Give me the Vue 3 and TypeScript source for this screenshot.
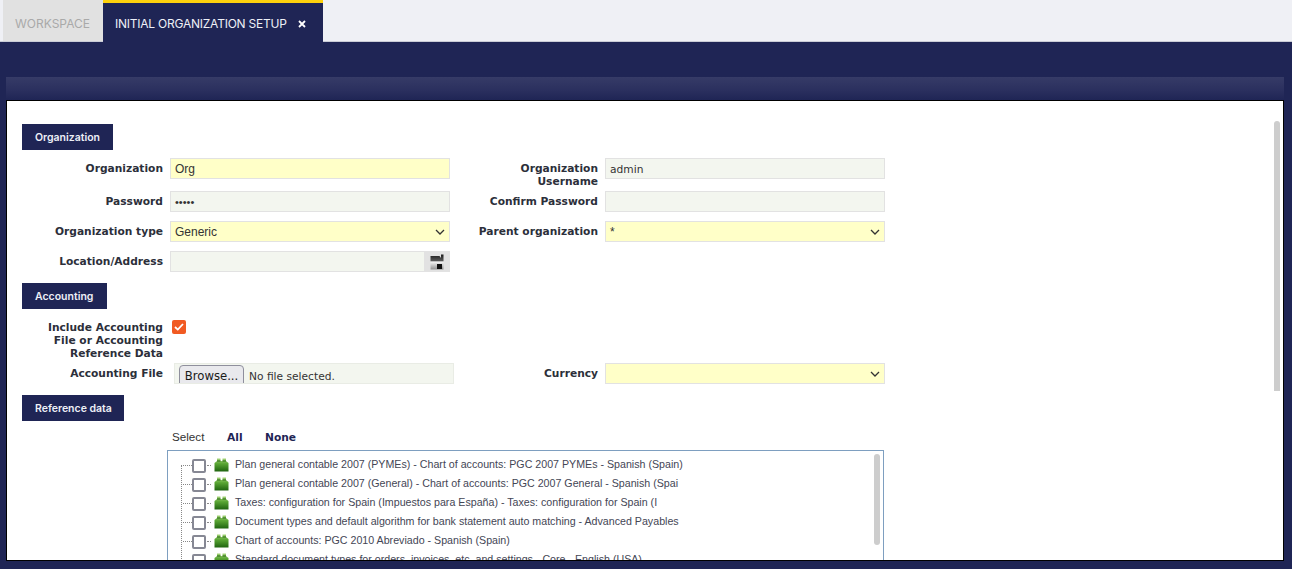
<script setup lang="ts">
const treeItems: string[] = [
  'Plan general contable 2007 (PYMEs) - Chart of accounts: PGC 2007 PYMEs - Spanish (Spain)',
  'Plan general contable 2007 (General) - Chart of accounts: PGC 2007 General - Spanish (Spai',
  'Taxes: configuration for Spain (Impuestos para España) - Taxes: configuration for Spain (I',
  'Document types and default algorithm for bank statement auto matching - Advanced Payables',
  'Chart of accounts: PGC 2010 Abreviado - Spanish (Spain)',
  'Standard document types for orders, invoices, etc. and settings - Core - English (USA)',
]
</script>

<template>
  <div class="app">
    <header class="tabbar">
      <div class="tab tab-idle">WORKSPACE</div>
      <div class="tab tab-active">
        <span>INITIAL ORGANIZATION SETUP</span>
        <svg class="close" width="8" height="8" viewBox="0 0 8 8"><path d="M1 1L7 7M7 1L1 7" stroke="#fff" stroke-width="1.8" /></svg>
      </div>
    </header>

    <div class="toolbar"></div>

    <main class="panel">
      <div class="section sec-org">Organization</div>

      <div class="row row-first">
        <label class="lbl">Organization</label>
        <div class="field req">Org</div>
        <label class="lbl lbl2">Organization Username</label>
        <div class="field dv">admin</div>
      </div>
      <div class="row row-pass">
        <label class="lbl">Password</label>
        <div class="field dots">•••••</div>
        <label class="lbl lbl2">Confirm Password</label>
        <div class="field"></div>
      </div>
      <div class="row row-sel">
        <label class="lbl">Organization type</label>
        <div class="field req sel">
          <span>Generic</span>
          <svg class="chev" width="10" height="6" viewBox="0 0 10 6"><path d="M1 1L5 5L9 1" fill="none" stroke="#333" stroke-width="1.3" /></svg>
        </div>
        <label class="lbl lbl2">Parent organization</label>
        <div class="field req sel">
          <span>*</span>
          <svg class="chev" width="10" height="6" viewBox="0 0 10 6"><path d="M1 1L5 5L9 1" fill="none" stroke="#333" stroke-width="1.3" /></svg>
        </div>
      </div>
      <div class="row row-loc">
        <label class="lbl">Location/Address</label>
        <div class="field loc">
          <span class="loc-btn">
            <svg width="14" height="16" viewBox="0 0 14 16">
              <defs>
                <linearGradient id="disk" x1="0" y1="0" x2="0" y2="1">
                  <stop offset="0" stop-color="#1c1c1c" />
                  <stop offset="0.4" stop-color="#555" />
                  <stop offset="0.5" stop-color="#f4f4f4" />
                  <stop offset="1" stop-color="#8f8f8f" />
                </linearGradient>
              </defs>
              <path d="M0.5 2H9.5L11 4V0.5H13.5V15.5H0.5Z" fill="url(#disk)" />
              <rect x="7" y="10" width="5" height="5" fill="#111" />
            </svg>
          </span>
        </div>
      </div>

      <div class="section sec-acc">Accounting</div>

      <div class="row row-check">
        <label class="lbl">Include Accounting File or Accounting Reference Data</label>
        <div class="check-wrap">
          <span class="check">
            <svg width="10" height="8" viewBox="0 0 10 8"><path d="M1 4L3.8 6.6L9 1" fill="none" stroke="#fff" stroke-width="1.8" /></svg>
          </span>
        </div>
      </div>
      <div class="row row-file">
        <label class="lbl">Accounting File</label>
        <div class="filebox">
          <span class="browse">Browse...</span>
          <span class="nofile">No file selected.</span>
        </div>
        <label class="lbl lbl2">Currency</label>
        <div class="field req sel">
          <span></span>
          <svg class="chev" width="10" height="6" viewBox="0 0 10 6"><path d="M1 1L5 5L9 1" fill="none" stroke="#333" stroke-width="1.3" /></svg>
        </div>
      </div>

      <div class="section sec-ref">Reference data</div>

      <div class="selectbar">
        <span class="sel-txt">Select</span>
        <span class="sel-link">All</span>
        <span class="sel-link">None</span>
      </div>

      <div class="tree">
        <div v-for="item in treeItems" :key="item" class="node">
          <span class="box"></span>
          <span class="dots-s"></span>
          <svg class="lego" width="15" height="14" viewBox="0 0 15 14">
            <defs>
              <linearGradient id="lego-body" x1="0" y1="0" x2="0" y2="1">
                <stop offset="0" stop-color="#a6d47a" />
                <stop offset="0.4" stop-color="#5aa634" />
                <stop offset="1" stop-color="#1f6410" />
              </linearGradient>
            </defs>
            <path d="M3 0.5H6.5V3H8.5V0.5H12V3L14.5 5V13.5H0.5V5L3 3Z" fill="url(#lego-body)" />
            <path d="M3 3H6.5M8.5 3H12" stroke="#2a6a16" stroke-width="1" />
          </svg>
          <span class="node-txt">{{ item }}</span>
        </div>
        <div class="tree-vline"></div>
        <div class="tree-scroll"></div>
      </div>

      <div class="panel-scroll"></div>
    </main>
  </div>
</template>

<style>
html, body { margin: 0; height: 100%; overflow: hidden; background: #1f2555; }
</style>

<style scoped>
.app {
  height: 569px;
  overflow: hidden;
  background: #1f2555;
  display: flex;
  flex-direction: column;
}
.tabbar {
  height: 41px;
  flex: none;
  display: flex;
  align-items: flex-end;
  padding-left: 3px;
  background: #eff0f5;
  border-bottom: 1px solid #c9ccd6;
}
.tab {
  font-family: Inter, "Open Sans", sans-serif;
  font-size: 12px;
  display: flex;
  align-items: center;
  box-sizing: border-box;
}
.tab-idle {
  width: 100px;
  height: 41px;
  padding: 5px 0 0 12px;
  background: #e1e1e1;
  color: #a9a9a9;
}
.tab-active {
  width: 220px;
  height: 42px;
  margin-bottom: -1px;
  padding: 2px 0 0 12px;
  background: #1f2555;
  color: #eef0f7;
  border-top: 3px solid #fdd10d;
  letter-spacing: -0.23px;
}
.close { margin-left: 11px; margin-top: 1px; }
.toolbar {
  flex: none;
  height: 23px;
  margin: 35px 8px 0 6px;
  background: linear-gradient(#363b67, #2a2f5e 60%, #1f2555);
}
.panel {
  position: relative;
  box-sizing: border-box;
  flex: none;
  height: 461px;
  margin: 0 8px 0 6px;
  padding: 23px 0 0 15px;
  overflow: hidden;
  background: #fff;
  border: 1px solid #000;
}
.section {
  box-sizing: border-box;
  height: 26px;
  line-height: 27px;
  padding-left: 13px;
  background: #1f2555;
  color: #eef0f7;
  font-family: Inter, "Open Sans", sans-serif;
  font-size: 10.5px;
  font-weight: 600;
}
.sec-org { width: 91px; }
.sec-acc { width: 85px; margin-top: 11px; }
.sec-ref { width: 102px; margin-top: 11px; }
.row {
  display: grid;
  grid-template-columns: 141px 287px 155px 280px;
  align-items: start;
}
.row-first { margin-top: 8px; height: 33px; }
.row-pass { height: 30px; }
.row-sel { height: 30px; }
.row-loc { height: 21px; }
.row-check { margin-top: 11px; height: 43px; }
.row-file { height: 21px; }
.lbl {
  font-family: "DejaVu Sans", sans-serif;
  font-size: 10.67px;
  font-weight: 700;
  line-height: 13px;
  color: #2c2f3a;
  text-align: right;
  padding-top: 4px;
}
.row-check .lbl { padding: 1px 0 0 20px; }
.lbl2 { padding: 4px 7px 0 20px; }
.field {
  box-sizing: border-box;
  width: 280px;
  height: 21px;
  padding-left: 4px;
  background: #f3f6ef;
  border: 1px solid #e2e2e2;
  font-family: "Liberation Sans", sans-serif;
  font-size: 12px;
  line-height: 20px;
  color: #333;
}
.row > .field:nth-child(2) { margin-left: 7px; }
.req { background: #ffffc8; }
.dv { font-family: "DejaVu Sans", sans-serif; font-size: 10.67px; line-height: 21px; }
.dots { font-size: 11px; }
.sel { display: flex; align-items: center; justify-content: space-between; padding-right: 4px; }
.loc { position: relative; }
.loc-btn {
  position: absolute;
  top: -1px;
  right: -1px;
  width: 26px;
  height: 21px;
  background: #e2e2e2;
  display: flex;
  align-items: center;
  justify-content: center;
}
.check-wrap { margin-left: 9px; }
.check {
  width: 14px;
  height: 14px;
  border-radius: 2px;
  background: #f15a22;
  display: flex;
  align-items: center;
  justify-content: center;
}
.filebox {
  box-sizing: border-box;
  width: 280px;
  height: 21px;
  margin-left: 11px;
  padding: 1px 0 0 4px;
  overflow: hidden;
  background: #f3f6ef;
  border: 1px solid #e9ece5;
  display: flex;
  align-items: flex-start;
  font-family: "DejaVu Sans", sans-serif;
}
.browse {
  box-sizing: border-box;
  flex: none;
  width: 65px;
  height: 24px;
  border: 1px solid #8f8f9d;
  border-radius: 4px;
  background: #e9e9ed;
  font-size: 11.67px;
  line-height: 21px;
  text-align: center;
  color: #1a1a1a;
}
.nofile { margin-left: 5px; font-size: 10.67px; line-height: 23px; color: #333; }
.selectbar {
  display: flex;
  align-items: center;
  height: 13px;
  margin: 10px 0 0 150px;
  font-family: "Liberation Sans", sans-serif;
  font-size: 11.67px;
  color: #333;
}
.sel-txt { width: 55px; margin-top: -2px; }
.sel-link {
  width: 38px;
  font-family: "DejaVu Sans", sans-serif;
  font-size: 10.67px;
  font-weight: 700;
  color: #1f2555;
}
.tree {
  position: relative;
  box-sizing: border-box;
  width: 717px;
  height: 140px;
  margin: 6px 0 0 145px;
  padding: 5px 0 0 15px;
  border: 1px solid #7e9fc0;
}
.node {
  display: flex;
  align-items: center;
  height: 19px;
  white-space: nowrap;
}
.box {
  position: relative;
  box-sizing: border-box;
  flex: none;
  width: 14px;
  height: 14px;
  margin-left: 9px;
  border: 2px solid #868894;
  border-radius: 2px;
  background: #fff;
}
.box::before {
  content: "";
  position: absolute;
  left: -11px;
  top: 4px;
  width: 9px;
  border-top: 1px dotted #888;
}
.dots-s {
  flex: none;
  width: 4px;
  margin: 0 3px 0 1px;
  border-top: 1px dotted #888;
}
.lego { flex: none; margin-top: -2px; }
.node-txt {
  margin: -3px 0 0 6px;
  font-family: "Liberation Sans", sans-serif;
  font-size: 10.67px;
  color: #444655;
}
.tree-vline {
  position: absolute;
  left: 13px;
  top: 14px;
  height: 130px;
  border-left: 1px dotted #888;
}
.tree-scroll {
  position: absolute;
  right: 3px;
  top: 3px;
  width: 6px;
  height: 91px;
  border-radius: 3px;
  background: #cdcdcd;
}
.panel-scroll {
  position: absolute;
  top: 20px;
  right: 3px;
  width: 6px;
  height: 270px;
  border-radius: 3px 3px 0 0;
  background: #cdcdcd;
}
</style>
